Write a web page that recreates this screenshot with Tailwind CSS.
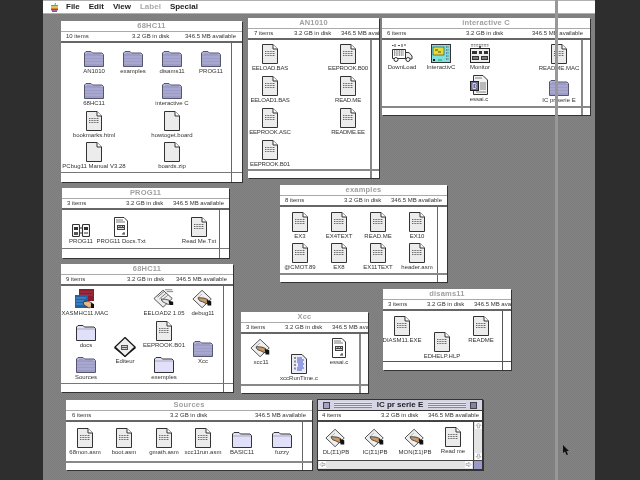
<!DOCTYPE html>
<html lang="en">
<head>
<meta charset="UTF-8">
<title>Finder</title>
<script src="https://cdn.jsdelivr.net/npm/@tailwindcss/browser@4"></script>
</head>
<body class="bg-[#2e2e2e] w-[640px] h-[480px] overflow-hidden font-['Liberation_Sans',sans-serif] text-[6px] text-[#333]">

<!-- shared icons -->
<svg class="hidden" xmlns="http://www.w3.org/2000/svg">
  <symbol id="folder" viewBox="0 0 20 16">
    <path d="M.5 15.500V2L2 .5h5L8.500 2H18L19.500 3.500v12z" fill="#b4b4dc" stroke="#55556e"/>
    <path d="M2 3v12M4 2v13M6 2v13M8 3v12M10 3v12M12 3v12M14 3v12M16 3v12M18 4v11" stroke="#7070a0" stroke-width=".7"/>
    <path d="M1 6h18M1 9h18M1 12h18" stroke="#c8c8e8" stroke-width=".5"/>
  </symbol>
  <symbol id="lfolder" viewBox="0 0 20 16">
    <path d="M.5 15.500V2L2 .5h5L8.500 2H18L19.500 3.500v12z" fill="#e0e0fa" stroke="#333"/>
    <path d="M1 4h18" stroke="#777" stroke-width=".5"/>
  </symbol>
  <symbol id="blank" viewBox="0 0 16 20">
    <path d="M.5.5H11L15.500 5v14.500H.5z" fill="#ececec" stroke="#333"/>
    <path d="M11 .5V5h4.500" fill="#fff" stroke="#333"/>
  </symbol>
  <symbol id="text" viewBox="0 0 16 20">
    <path d="M.5.5H11L15.500 5v14.500H.5z" fill="#ececec" stroke="#333"/>
    <path d="M11 .5V5h4.500" fill="#fff" stroke="#333"/>
    <path d="M3 7.500h10M3 9.500h10M3 11.500h10" stroke="#666" stroke-dasharray="1 .6"/>
  </symbol>
  <symbol id="edit" viewBox="0 0 14 20">
    <path d="M.5.5H10L13.500 4v15.500H.5z" fill="#fff" stroke="#333"/>
    <path d="M2 3h7M2 5h9" stroke="#555" stroke-width=".8"/>
    <path d="M3 8h8v5H3z" fill="#444"/>
    <path d="M4 9.500h1.500M6.500 9.500H8M9 9.500h1M4 11.500h6" stroke="#fff" stroke-width=".8"/>
    <path d="M8 17h3M10 15v2" stroke="#333"/>
  </symbol>
  <symbol id="hand" viewBox="0 0 24 20">
    <path d="M11 .5 21 10 11 19.500 1 10z" fill="#efefef" stroke="#444"/>
    <path d="M6 9 11 4.500" stroke="#999" stroke-width=".7"/>
    <path d="M7 8.500l6 .5 4 1.500 1 3.500-2.500 1-4-2-3-1-1.500-2z" fill="#c99a66" stroke="#222" stroke-width=".8"/>
    <path d="M16 11l5 1.500V17h-4z" fill="#111"/>
  </symbol>
  <symbol id="handtext" viewBox="0 0 24 21">
    <path d="M11 1.500 21 10.500 11 20 1 10.500z" fill="#efefef" stroke="#444"/>
    <path d="M5 9 12 3M7 11l7-6M9 13l7-6M13 1h8M15 3h7" stroke="#555" stroke-width=".8"/>
    <path d="M9 11l5 .5 4 1 1 3.500-2.500 1-4-2-2-1z" fill="#e8e8e8" stroke="#222" stroke-width=".8"/>
    <path d="M17 13l5 1v3.500h-4z" fill="#111"/>
  </symbol>
  <symbol id="editeur" viewBox="0 0 22 20">
    <path d="M11 .5 21 10 11 19.500 1 10z" fill="#eee" stroke="#111" stroke-width="1.200"/>
    <path d="M1 10 11 19.500 21 10 22 11 11 20 0 11z" fill="#111"/>
    <path d="M7 8h7v5H7z" fill="#555"/>
    <path d="M8 9.500h5M8 11.500h5" stroke="#fff" stroke-width=".7"/>
  </symbol>
  <symbol id="truck" viewBox="0 0 22 20">
    <path d="M1 2.500h1.500M4 1v3M7 2.500h2M11 1v3M13 2h2" stroke="#333" stroke-width=".9"/>
    <path d="M1.500 6.500h13v9h-13z" fill="#fff" stroke="#333"/>
    <path d="M3 8h10M3 10h10M3 12h10" stroke="#333" stroke-dasharray="1 .7"/>
    <path d="M14.500 9.500H18l3 3.500v3H14.500z" fill="#eee" stroke="#333"/>
    <circle cx="5" cy="16.500" r="2" fill="#fff" stroke="#333"/>
    <circle cx="17" cy="16.500" r="2" fill="#fff" stroke="#333"/>
  </symbol>
  <symbol id="ic" viewBox="0 0 20 19">
    <rect width="20" height="19" fill="#7fe0e0"/>
    <rect x=".5" y=".5" width="19" height="18" fill="none" stroke="#333"/>
    <rect x="2" y="3" width="11" height="8" fill="#e8dc30" stroke="#333" stroke-width=".6"/>
    <path d="M4 6h3M7 8h3" stroke="#444"/>
    <path d="M15 3h3M15 6h3M15 9h3M15 12h3M15 15h3" stroke="#446" stroke-dasharray="1 .5"/>
    <path d="M2 15h2v2H2z" fill="#111"/>
    <path d="M7 16h4" stroke="#0a5"/>
  </symbol>
  <symbol id="monitor" viewBox="0 0 20 20">
    <path d="M1 1.500h18M1 3h18" stroke="#777" stroke-width=".8" stroke-dasharray="2 .6"/>
    <path d="M10 3v3" stroke="#222" stroke-width="1.500"/>
    <rect x=".5" y="5.500" width="19" height="14" fill="#eee" stroke="#222"/>
    <path d="M2 8h5v3H2zM9 8h3v3H9zM14 8h4v3h-4zM2 13h7v4H2zM11 13h7v4h-7z" fill="#333"/>
    <path d="M3 15h5M12 15h5" stroke="#fff" stroke-width=".7"/>
  </symbol>
  <symbol id="essai" viewBox="0 0 18 20">
    <path d="M3.500.5H13L17.500 5v14.500H3.500z" fill="#f2f2f2" stroke="#333"/>
    <path d="M5 3h7M10 8h6M10 10h6M10 12h6M10 14h6M6 17h10" stroke="#666" stroke-width=".8"/>
    <rect x=".5" y="6.500" width="8" height="9" fill="#6e6e9c" stroke="#222"/>
    <path d="M3 8.500h2.500l.5 1-.5 1.500.5 1.500-.5 1H3z" fill="none" stroke="#fff" stroke-width=".7"/>
  </symbol>
  <symbol id="xasm" viewBox="0 0 20 20">
    <rect x="4" y="0" width="15" height="12" fill="#8a1c30"/>
    <path d="M5 3h13M5 6h13" stroke="#a84a58" stroke-width=".7"/>
    <rect x="0" y="6" width="13" height="13" fill="#1e64a8"/>
    <path d="M1 9h10M1 12h8M1 15h8" stroke="#7fb0dc" stroke-width=".7"/>
    <path d="M8 13l5-1 4 2 1 3-4 2-5-3z" fill="#e5b88a" stroke="#222" stroke-width=".7"/>
    <path d="M16 14l3 1v4h-3z" fill="#111"/>
  </symbol>
  <symbol id="prog" viewBox="0 0 18 13">
    <rect x=".5" y=".5" width="7" height="12" rx="1" fill="#fff" stroke="#333" stroke-width="1.100"/>
    <rect x="10.500" y=".5" width="7" height="12" rx="1" fill="#fff" stroke="#333" stroke-width="1.100"/>
    <rect x="2" y="3" width="4" height="3" fill="#333"/><rect x="2" y="8" width="4" height="3" fill="#555"/>
    <rect x="12" y="3" width="4" height="3" fill="#333"/><path d="M12 9h4" stroke="#333"/>
    <path d="M8 4h2M8 9h2" stroke="#333"/>
  </symbol>
  <symbol id="runtime" viewBox="0 0 16 20">
    <path d="M.5.5H11L15.500 5v14.500H.5z" fill="#ececf8" stroke="#333"/>
    <path d="M4 3v14" stroke="#333" stroke-dasharray="2 1.500"/>
    <path d="M6 4h5M6 6h7M6 8h6M7 10h6M7 12h5M6 14h7M6 16h5" stroke="#3c50c8" stroke-width="1.200"/>
  </symbol>
</svg>

<main class="relative ml-[43px] w-[552px] h-[480px] bg-[#808080] bg-[repeating-conic-gradient(#7d7d7d_0_25%,#838383_0_50%)] bg-size-[2px_2px] blur-[0.3px]">

  <!-- menu bar -->
  <header class="h-[14px] bg-white border-t border-b border-[#b0b0b0] flex items-center font-bold text-[8px] text-[#222]">
    <svg class="ml-[8px] w-[7px] h-[9px]" viewBox="0 0 7 9">
      <path d="M3.500 2 4 .2 5 0 4.300 2z" fill="#3a9a3a"/>
      <rect y="2" width="7" height="1.500" fill="#4caf50"/>
      <rect y="3.500" width="7" height="1.200" fill="#f2c230"/>
      <rect y="4.700" width="7" height="1.300" fill="#e8832a"/>
      <rect y="6" width="7" height="1.400" fill="#d62f2f"/>
      <rect x="1" y="7.400" width="5" height="1.500" fill="#7a3fa0"/>
    </svg>
    <span class="ml-[8px]">File</span>
    <span class="ml-[9px]">Edit</span>
    <span class="ml-[9px]">View</span>
    <span class="ml-[9px] text-[#aaa]">Label</span>
    <span class="ml-[9px]">Special</span>
  </header>

  <!-- 68HC11 (top) -->
  <section class="absolute left-[18px] top-[21px] w-[181px] h-[161px] bg-white shadow-[1px_1px_0_#333] overflow-hidden flex flex-col whitespace-nowrap">
    <h2 class="h-[11px] shrink-0 flex items-center justify-center border-b border-[#aaa] text-[7.5px] font-bold tracking-[.2px] text-[#a0a0a0]">68HC11</h2>
    <div class="h-[11px] shrink-0 flex items-center pl-[5px] border-b-2 border-[#666]"><span class="w-[66px]">10 items</span><span class="w-[53px]">3.2 GB in disk</span><span>346.5 MB available</span></div>
    <div class="flex-1 flex">
      <div class="relative flex-1">
        <div class="absolute left-[-7px] top-[8px] w-[80px] flex flex-col items-center"><svg class="w-[20px] h-[16px]"><use href="#folder"/></svg><span class="leading-[8px]">AN1010</span></div>
        <div class="absolute left-[32px] top-[8px] w-[80px] flex flex-col items-center"><svg class="w-[20px] h-[16px]"><use href="#folder"/></svg><span class="leading-[8px]">examples</span></div>
        <div class="absolute left-[71px] top-[8px] w-[80px] flex flex-col items-center"><svg class="w-[20px] h-[16px]"><use href="#folder"/></svg><span class="leading-[8px]">disams11</span></div>
        <div class="absolute left-[110px] top-[8px] w-[80px] flex flex-col items-center"><svg class="w-[20px] h-[16px]"><use href="#folder"/></svg><span class="leading-[8px]">PROG11</span></div>
        <div class="absolute left-[-7px] top-[40px] w-[80px] flex flex-col items-center"><svg class="w-[20px] h-[16px]"><use href="#folder"/></svg><span class="leading-[8px]">68HC11</span></div>
        <div class="absolute left-[71px] top-[40px] w-[80px] flex flex-col items-center"><svg class="w-[20px] h-[16px]"><use href="#folder"/></svg><span class="leading-[8px]">interactive C</span></div>
        <div class="absolute left-[-7px] top-[68px] w-[80px] flex flex-col items-center"><svg class="w-[16px] h-[20px]"><use href="#text"/></svg><span class="leading-[8px]">bookmarks.html</span></div>
        <div class="absolute left-[71px] top-[68px] w-[80px] flex flex-col items-center"><svg class="w-[16px] h-[20px]"><use href="#blank"/></svg><span class="leading-[8px]">howtoget.board</span></div>
        <div class="absolute left-[-7px] top-[99px] w-[80px] flex flex-col items-center"><svg class="w-[16px] h-[20px]"><use href="#blank"/></svg><span class="leading-[8px]">PCbug11 Manual V3.28</span></div>
        <div class="absolute left-[71px] top-[99px] w-[80px] flex flex-col items-center"><svg class="w-[16px] h-[20px]"><use href="#blank"/></svg><span class="leading-[8px]">boards.zip</span></div>
      </div>
      <div class="w-[11px] border-l border-[#666]"></div>
    </div>
    <div class="h-[10px] shrink-0 flex border-t border-[#777]"><div class="flex-1"></div><div class="w-[11px] border-l border-[#666]"></div></div>
  </section>

  <!-- AN1010 -->
  <section class="absolute left-[205px] top-[18px] w-[131px] h-[160px] bg-white shadow-[1px_1px_0_#333] overflow-hidden flex flex-col whitespace-nowrap">
    <h2 class="h-[11px] shrink-0 flex items-center justify-center border-b border-[#aaa] text-[7.5px] font-bold tracking-[.2px] text-[#a0a0a0]">AN1010</h2>
    <div class="h-[11px] shrink-0 flex items-center pl-[6px] border-b-2 border-[#666]"><span class="w-[40px] shrink-0">7 items</span><span class="w-[47px] shrink-0">3.2 GB in disk</span><span class="flex-1 min-w-0 overflow-hidden">346.5 MB available</span></div>
    <div class="flex-1 flex">
      <div class="relative flex-1 tracking-[-.2px]">
        <div class="absolute left-[-18px] top-[4px] w-[80px] flex flex-col items-center"><svg class="w-[16px] h-[20px]"><use href="#text"/></svg><span class="leading-[8px]">EELOAD.BAS</span></div>
        <div class="absolute left-[60px] top-[4px] w-[80px] flex flex-col items-center"><svg class="w-[16px] h-[20px]"><use href="#text"/></svg><span class="leading-[8px]">EEPROOK.B00</span></div>
        <div class="absolute left-[-18px] top-[36px] w-[80px] flex flex-col items-center"><svg class="w-[16px] h-[20px]"><use href="#text"/></svg><span class="leading-[8px]">EELOAD1.BAS</span></div>
        <div class="absolute left-[60px] top-[36px] w-[80px] flex flex-col items-center"><svg class="w-[16px] h-[20px]"><use href="#text"/></svg><span class="leading-[8px]">READ.ME</span></div>
        <div class="absolute left-[-18px] top-[68px] w-[80px] flex flex-col items-center"><svg class="w-[16px] h-[20px]"><use href="#text"/></svg><span class="leading-[8px]">EEPROOK.ASC</span></div>
        <div class="absolute left-[60px] top-[68px] w-[80px] flex flex-col items-center"><svg class="w-[16px] h-[20px]"><use href="#text"/></svg><span class="leading-[8px]">README.EE</span></div>
        <div class="absolute left-[-18px] top-[100px] w-[80px] flex flex-col items-center"><svg class="w-[16px] h-[20px]"><use href="#text"/></svg><span class="leading-[8px]">EEPROOK.B01</span></div>
      </div>
      <div class="w-[9px] border-l-2 border-[#888]"></div>
    </div>
    <div class="h-[9px] shrink-0 flex border-t-2 border-[#888]"><div class="flex-1"></div><div class="w-[9px] border-l-2 border-[#888]"></div></div>
  </section>

  <!-- interactive C -->
  <section class="absolute left-[339px] top-[18px] w-[208px] h-[97px] bg-white shadow-[1px_1px_0_#333] overflow-hidden flex flex-col whitespace-nowrap">
    <h2 class="h-[11px] shrink-0 flex items-center justify-center border-b border-[#aaa] text-[7.5px] font-bold tracking-[.2px] text-[#a0a0a0]">interactive C</h2>
    <div class="h-[11px] shrink-0 flex items-center pl-[5px] border-b-2 border-[#666]"><span class="w-[79px]">6 items</span><span class="w-[66px]">3.2 GB in disk</span><span>346.5 MB available</span></div>
    <div class="flex-1 flex">
      <div class="relative flex-1">
        <div class="absolute left-[-20px] top-[3px] w-[80px] flex flex-col items-center"><svg class="w-[22px] h-[20px]"><use href="#truck"/></svg><span class="leading-[8px]">DownLoad</span></div>
        <div class="absolute left-[19px] top-[4px] w-[80px] flex flex-col items-center"><svg class="w-[20px] h-[19px]"><use href="#ic"/></svg><span class="leading-[8px]">InteractivC</span></div>
        <div class="absolute left-[58px] top-[3px] w-[80px] flex flex-col items-center"><svg class="w-[20px] h-[20px]"><use href="#monitor"/></svg><span class="leading-[8px]">Monitor</span></div>
        <div class="absolute left-[137px] top-[4px] w-[80px] flex flex-col items-center"><svg class="w-[16px] h-[20px]"><use href="#text"/></svg><span class="leading-[8px]">README.MAC</span></div>
        <div class="absolute left-[57px] top-[35px] w-[80px] flex flex-col items-center"><svg class="w-[18px] h-[20px]"><use href="#essai"/></svg><span class="leading-[8px]">essai.c</span></div>
        <div class="absolute left-[137px] top-[40px] w-[80px] flex flex-col items-center"><svg class="w-[20px] h-[16px]"><use href="#folder"/></svg><span class="leading-[8px]">IC pr serie E</span></div>
      </div>
      <div class="w-[9px] border-l-2 border-[#888]"></div>
    </div>
    <div class="h-[9px] shrink-0 flex border-t-2 border-[#888]"><div class="flex-1"></div><div class="w-[9px] border-l-2 border-[#888]"></div></div>
  </section>

  <!-- PROG11 -->
  <section class="absolute left-[19px] top-[188px] w-[167px] h-[70px] bg-white shadow-[1px_1px_0_#333] overflow-hidden flex flex-col whitespace-nowrap">
    <h2 class="h-[11px] shrink-0 flex items-center justify-center border-b border-[#aaa] text-[7.5px] font-bold tracking-[.2px] text-[#a0a0a0]">PROG11</h2>
    <div class="h-[11px] shrink-0 flex items-center pl-[5px] border-b-2 border-[#666]"><span class="w-[59px]">3 items</span><span class="w-[47px]">3.2 GB in disk</span><span>346.5 MB available</span></div>
    <div class="flex-1 flex">
      <div class="relative flex-1">
        <div class="absolute left-[-21px] top-[14px] w-[80px] flex flex-col items-center"><svg class="w-[18px] h-[13px]"><use href="#prog"/></svg><span class="leading-[8px]">PROG11</span></div>
        <div class="absolute left-[19px] top-[7px] w-[80px] flex flex-col items-center"><svg class="w-[14px] h-[20px]"><use href="#edit"/></svg><span class="leading-[8px]">PROG11 Docs.Txt</span></div>
        <div class="absolute left-[97px] top-[7px] w-[80px] flex flex-col items-center"><svg class="w-[16px] h-[20px]"><use href="#text"/></svg><span class="leading-[8px]">Read Me.Txt</span></div>
      </div>
      <div class="w-[10px] border-l border-[#666]"></div>
    </div>
    <div class="h-[10px] shrink-0 flex border-t border-[#777]"><div class="flex-1"></div><div class="w-[10px] border-l border-[#666]"></div></div>
  </section>

  <!-- 68HC11 (lower) -->
  <section class="absolute left-[18px] top-[264px] w-[172px] h-[128px] bg-white shadow-[1px_1px_0_#333] overflow-hidden flex flex-col whitespace-nowrap">
    <h2 class="h-[11px] shrink-0 flex items-center justify-center border-b border-[#aaa] text-[7.5px] font-bold tracking-[.2px] text-[#a0a0a0]">68HC11</h2>
    <div class="h-[11px] shrink-0 flex items-center pl-[5px] border-b-2 border-[#666]"><span class="w-[61px]">9 items</span><span class="w-[49px]">3.2 GB in disk</span><span>346.5 MB available</span></div>
    <div class="flex-1 flex">
      <div class="relative flex-1">
        <div class="absolute left-[-16px] top-[3px] w-[80px] flex flex-col items-center"><svg class="w-[20px] h-[20px]"><use href="#xasm"/></svg><span class="leading-[8px]">XASMHC11.MAC</span></div>
        <div class="absolute left-[63px] top-[2px] w-[80px] flex flex-col items-center"><svg class="w-[22px] h-[21px]"><use href="#handtext"/></svg><span class="leading-[8px]">EELOAD2 1.05</span></div>
        <div class="absolute left-[102px] top-[3px] w-[80px] flex flex-col items-center"><svg class="w-[22px] h-[20px]"><use href="#hand"/></svg><span class="leading-[8px]">debug11</span></div>
        <div class="absolute left-[-15px] top-[39px] w-[80px] flex flex-col items-center"><svg class="w-[20px] h-[16px]"><use href="#lfolder"/></svg><span class="leading-[8px]">docs</span></div>
        <div class="absolute left-[24px] top-[51px] w-[80px] flex flex-col items-center"><svg class="w-[22px] h-[20px]"><use href="#editeur"/></svg><span class="leading-[8px]">Editeur</span></div>
        <div class="absolute left-[63px] top-[35px] w-[80px] flex flex-col items-center"><svg class="w-[16px] h-[20px]"><use href="#text"/></svg><span class="leading-[8px]">EEPROOK.B01</span></div>
        <div class="absolute left-[102px] top-[55px] w-[80px] flex flex-col items-center"><svg class="w-[20px] h-[16px]"><use href="#folder"/></svg><span class="leading-[8px]">Xcc</span></div>
        <div class="absolute left-[-15px] top-[71px] w-[80px] flex flex-col items-center"><svg class="w-[20px] h-[16px]"><use href="#folder"/></svg><span class="leading-[8px]">Sources</span></div>
        <div class="absolute left-[63px] top-[71px] w-[80px] flex flex-col items-center"><svg class="w-[20px] h-[16px]"><use href="#lfolder"/></svg><span class="leading-[8px]">exemples</span></div>
      </div>
      <div class="w-[10px] border-l border-[#666]"></div>
    </div>
    <div class="h-[9px] shrink-0 flex border-t border-[#777]"><div class="flex-1"></div><div class="w-[10px] border-l border-[#666]"></div></div>
  </section>

  <!-- examples -->
  <section class="absolute left-[237px] top-[185px] w-[167px] h-[97px] bg-white shadow-[1px_1px_0_#333] overflow-hidden flex flex-col whitespace-nowrap">
    <h2 class="h-[11px] shrink-0 flex items-center justify-center border-b border-[#aaa] text-[7.5px] font-bold tracking-[.2px] text-[#a0a0a0]">examples</h2>
    <div class="h-[11px] shrink-0 flex items-center pl-[5px] border-b-2 border-[#666]"><span class="w-[59px]">8 items</span><span class="w-[47px]">3.2 GB in disk</span><span>346.5 MB available</span></div>
    <div class="flex-1 flex">
      <div class="relative flex-1">
        <div class="absolute left-[-20px] top-[5px] w-[80px] flex flex-col items-center"><svg class="w-[16px] h-[20px]"><use href="#text"/></svg><span class="leading-[8px]">EX3</span></div>
        <div class="absolute left-[19px] top-[5px] w-[80px] flex flex-col items-center"><svg class="w-[16px] h-[20px]"><use href="#text"/></svg><span class="leading-[8px]">EX4TEXT</span></div>
        <div class="absolute left-[58px] top-[5px] w-[80px] flex flex-col items-center"><svg class="w-[16px] h-[20px]"><use href="#text"/></svg><span class="leading-[8px]">READ.ME</span></div>
        <div class="absolute left-[97px] top-[5px] w-[80px] flex flex-col items-center"><svg class="w-[16px] h-[20px]"><use href="#text"/></svg><span class="leading-[8px]">EX10</span></div>
        <div class="absolute left-[-20px] top-[36px] w-[80px] flex flex-col items-center"><svg class="w-[16px] h-[20px]"><use href="#text"/></svg><span class="leading-[8px]">@CMOT.89</span></div>
        <div class="absolute left-[19px] top-[36px] w-[80px] flex flex-col items-center"><svg class="w-[16px] h-[20px]"><use href="#text"/></svg><span class="leading-[8px]">EX8</span></div>
        <div class="absolute left-[58px] top-[36px] w-[80px] flex flex-col items-center"><svg class="w-[16px] h-[20px]"><use href="#text"/></svg><span class="leading-[8px]">EX11TEXT</span></div>
        <div class="absolute left-[97px] top-[36px] w-[80px] flex flex-col items-center"><svg class="w-[16px] h-[20px]"><use href="#text"/></svg><span class="leading-[8px]">header.asm</span></div>
      </div>
      <div class="w-[10px] border-l border-[#666]"></div>
    </div>
    <div class="h-[9px] shrink-0 flex border-t-2 border-[#888]"><div class="flex-1"></div><div class="w-[10px] border-l border-[#666]"></div></div>
  </section>

  <!-- Xcc -->
  <section class="absolute left-[198px] top-[312px] w-[127px] h-[81px] bg-white shadow-[1px_1px_0_#333] overflow-hidden flex flex-col whitespace-nowrap">
    <h2 class="h-[11px] shrink-0 flex items-center justify-center border-b border-[#aaa] text-[7.5px] font-bold tracking-[.2px] text-[#a0a0a0]">Xcc</h2>
    <div class="h-[11px] shrink-0 flex items-center pl-[5px] border-b-2 border-[#666]"><span class="w-[39px] shrink-0">3 items</span><span class="w-[47px] shrink-0">3.2 GB in disk</span><span class="flex-1 min-w-0 overflow-hidden">346.5 MB available</span></div>
    <div class="flex-1 flex">
      <div class="relative flex-1">
        <div class="absolute left-[-20px] top-[4px] w-[80px] flex flex-col items-center"><svg class="w-[22px] h-[20px]"><use href="#hand"/></svg><span class="leading-[8px]">xcc11</span></div>
        <div class="absolute left-[18px] top-[20px] w-[80px] flex flex-col items-center"><svg class="w-[16px] h-[20px]"><use href="#runtime"/></svg><span class="leading-[8px]">xccRunTime.c</span></div>
        <div class="absolute left-[58px] top-[4px] w-[80px] flex flex-col items-center"><svg class="w-[14px] h-[20px]"><use href="#edit"/></svg><span class="leading-[8px]">essai.c</span></div>
      </div>
      <div class="w-[9px] border-l-2 border-[#888]"></div>
    </div>
    <div class="h-[9px] shrink-0 flex border-t-2 border-[#888]"><div class="flex-1"></div><div class="w-[9px] border-l-2 border-[#888]"></div></div>
  </section>

  <!-- disams11 -->
  <section class="absolute left-[340px] top-[289px] w-[128px] h-[81px] bg-white shadow-[1px_1px_0_#333] overflow-hidden flex flex-col whitespace-nowrap">
    <h2 class="h-[11px] shrink-0 flex items-center justify-center border-b border-[#aaa] text-[7.5px] font-bold tracking-[.2px] text-[#a0a0a0]">disams11</h2>
    <div class="h-[11px] shrink-0 flex items-center pl-[5px] border-b-2 border-[#666]"><span class="w-[39px] shrink-0">3 items</span><span class="w-[47px] shrink-0">3.2 GB in disk</span><span class="flex-1 min-w-0 overflow-hidden">346.5 MB available</span></div>
    <div class="flex-1 flex">
      <div class="relative flex-1">
        <div class="absolute left-[-21px] top-[5px] w-[80px] flex flex-col items-center"><svg class="w-[16px] h-[20px]"><use href="#text"/></svg><span class="leading-[8px]">DIASM11.EXE</span></div>
        <div class="absolute left-[19px] top-[21px] w-[80px] flex flex-col items-center"><svg class="w-[16px] h-[20px]"><use href="#text"/></svg><span class="leading-[8px]">EDHELP.HLP</span></div>
        <div class="absolute left-[58px] top-[5px] w-[80px] flex flex-col items-center"><svg class="w-[16px] h-[20px]"><use href="#text"/></svg><span class="leading-[8px]">README</span></div>
      </div>
      <div class="w-[9px] border-l border-[#555]"></div>
    </div>
    <div class="h-[9px] shrink-0 flex border-t border-[#555]"><div class="flex-1"></div><div class="w-[9px] border-l border-[#555]"></div></div>
  </section>

  <!-- Sources -->
  <section class="absolute left-[23px] top-[400px] w-[246px] h-[70px] bg-white shadow-[1px_1px_0_#333] overflow-hidden flex flex-col whitespace-nowrap">
    <h2 class="h-[11px] shrink-0 flex items-center justify-center border-b border-[#aaa] text-[7.5px] font-bold tracking-[.2px] text-[#a0a0a0]">Sources</h2>
    <div class="h-[11px] shrink-0 flex items-center pl-[6px] border-b-2 border-[#666]"><span class="w-[98px]">6 items</span><span class="w-[85px]">3.2 GB in disk</span><span>346.5 MB available</span></div>
    <div class="flex-1 flex">
      <div class="relative flex-1">
        <div class="absolute left-[-21px] top-[6px] w-[80px] flex flex-col items-center"><svg class="w-[16px] h-[20px]"><use href="#text"/></svg><span class="leading-[8px]">68mon.asm</span></div>
        <div class="absolute left-[18px] top-[6px] w-[80px] flex flex-col items-center"><svg class="w-[16px] h-[20px]"><use href="#text"/></svg><span class="leading-[8px]">boot.asm</span></div>
        <div class="absolute left-[58px] top-[6px] w-[80px] flex flex-col items-center"><svg class="w-[16px] h-[20px]"><use href="#text"/></svg><span class="leading-[8px]">gmath.asm</span></div>
        <div class="absolute left-[97px] top-[6px] w-[80px] flex flex-col items-center"><svg class="w-[16px] h-[20px]"><use href="#text"/></svg><span class="leading-[8px]">xcc11run.asm</span></div>
        <div class="absolute left-[136px] top-[10px] w-[80px] flex flex-col items-center"><svg class="w-[20px] h-[16px]"><use href="#lfolder"/></svg><span class="leading-[8px]">BASIC11</span></div>
        <div class="absolute left-[176px] top-[10px] w-[80px] flex flex-col items-center"><svg class="w-[20px] h-[16px]"><use href="#lfolder"/></svg><span class="leading-[8px]">fuzzy</span></div>
      </div>
      <div class="w-[10px] border-l border-[#666]"></div>
    </div>
    <div class="h-[9px] shrink-0 flex border-t-2 border-[#888]"><div class="flex-1"></div><div class="w-[10px] border-l border-[#666]"></div></div>
  </section>

  <!-- IC pr serie E (active window) -->
  <section class="absolute left-[274px] top-[399px] w-[166px] h-[71px] bg-white border border-[#333] shadow-[1px_1px_0_#333] overflow-hidden flex flex-col whitespace-nowrap">
    <h2 class="h-[11px] shrink-0 flex items-center gap-[4px] px-[5px] bg-[#d4d4e4] border-b border-[#333] text-[8px] font-bold text-[#222]">
      <span class="w-[7px] h-[7px] bg-[#a0a0cc] border border-[#444] shrink-0"></span>
      <span class="flex-1 h-[6px] bg-[repeating-linear-gradient(0deg,#888_0,#888_1px,#e4e4ee_1px,#e4e4ee_2px)]"></span>
      <span class="px-[1px]">IC pr serie E</span>
      <span class="flex-1 h-[6px] bg-[repeating-linear-gradient(0deg,#888_0,#888_1px,#e4e4ee_1px,#e4e4ee_2px)]"></span>
      <span class="w-[7px] h-[7px] bg-[#8080b4] border border-[#444] shrink-0"></span>
    </h2>
    <div class="h-[11px] shrink-0 flex items-center pl-[4px] border-b-2 border-[#444]"><span class="w-[59px]">4 items</span><span class="w-[47px]">3.2 GB in disk</span><span>346.5 MB available</span></div>
    <div class="flex-1 flex">
      <div class="relative flex-1">
        <div class="absolute left-[-22px] top-[6px] w-[80px] flex flex-col items-center"><svg class="w-[22px] h-[20px]"><use href="#hand"/></svg><span class="leading-[8px]">DL(Σ1)PB</span></div>
        <div class="absolute left-[17px] top-[6px] w-[80px] flex flex-col items-center"><svg class="w-[22px] h-[20px]"><use href="#hand"/></svg><span class="leading-[8px]">IC(Σ1)PB</span></div>
        <div class="absolute left-[57px] top-[6px] w-[80px] flex flex-col items-center"><svg class="w-[22px] h-[20px]"><use href="#hand"/></svg><span class="leading-[8px]">MON(Σ1)PB</span></div>
        <div class="absolute left-[95px] top-[5px] w-[80px] flex flex-col items-center"><svg class="w-[16px] h-[20px]"><use href="#text"/></svg><span class="leading-[8px]">Read me</span></div>
      </div>
      <div class="w-[9px] shrink-0 border-l border-[#444] bg-[#e4e4e4] flex flex-col justify-between items-center">
        <svg class="w-[7px] h-[7px] bg-white" viewBox="0 0 7 7"><path d="M3.500 1 6 3.500H4.500V6h-2V3.500H1z" fill="#e8e8f4" stroke="#999" stroke-width=".6"/></svg>
        <svg class="w-[7px] h-[7px] bg-white" viewBox="0 0 7 7"><path d="M3.500 6 6 3.500H4.500V1h-2v2.500H1z" fill="#e8e8f4" stroke="#999" stroke-width=".6"/></svg>
      </div>
    </div>
    <div class="h-[9px] shrink-0 flex border-t border-[#444] bg-[#e4e4e4]">
      <svg class="w-[7px] h-[7px] ml-[1px] bg-white" viewBox="0 0 7 7"><path d="M1 3.500 3.500 1v1.500H6v2H3.500V6z" fill="#e8e8f4" stroke="#999" stroke-width=".6"/></svg>
      <div class="flex-1"></div>
      <svg class="w-[7px] h-[7px] mr-[1px] bg-white" viewBox="0 0 7 7"><path d="M6 3.500 3.500 1v1.500H1v2h2.500V6z" fill="#e8e8f4" stroke="#999" stroke-width=".6"/></svg>
      <div class="w-[9px] border-l border-[#444] bg-[#9a9ac8]"></div>
    </div>
  </section>

  <!-- light vertical streak over everything -->
  <div class="absolute left-[512px] top-0 w-[3px] h-[480px] bg-[#989898]"></div>

  <!-- mouse pointer -->
  <svg class="absolute left-[520px] top-[445px] w-[6px] h-[10px]" viewBox="0 0 6 10"><path d="M0 0v8l2-1.500L3.500 10 5 9.500 3.500 6H6z" fill="#111"/></svg>
</main>
</body>
</html>
